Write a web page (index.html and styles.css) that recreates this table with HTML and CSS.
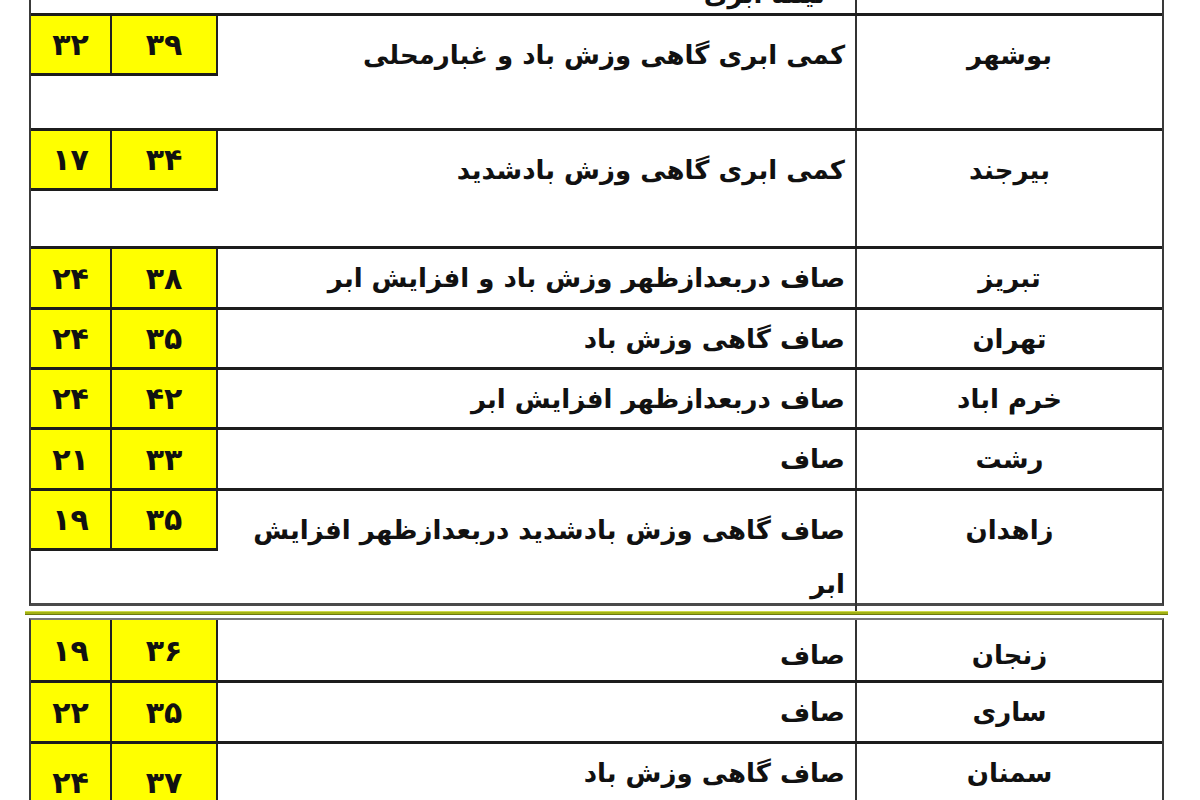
FILE: index.html
```html
<!DOCTYPE html>
<html lang="fa">
<head>
<meta charset="utf-8">
<title>جدول وضعیت هوا</title>
<link rel="stylesheet" href="styles.css">
</head>
<body>
<div class="sheet">
  <div class="table upper">
    <div class="row partial">
      <div class="nums blank"></div>
      <div class="desc"><span class="cut">نیمه ابری</span></div>
      <div class="city"></div>
    </div>
    <div class="row tall">
      <div class="nums"><div class="yb"><span class="mn">۳۲</span><span class="mx">۳۹</span></div></div>
      <div class="desc">کمی ابری گاهی وزش باد و غبارمحلی</div>
      <div class="city">بوشهر</div>
    </div>
    <div class="row tall t2">
      <div class="nums"><div class="yb"><span class="mn">۱۷</span><span class="mx">۳۴</span></div></div>
      <div class="desc">کمی ابری گاهی وزش بادشدید</div>
      <div class="city">بیرجند</div>
    </div>
    <div class="row h61">
      <div class="nums"><div class="yb"><span class="mn">۲۴</span><span class="mx">۳۸</span></div></div>
      <div class="desc">صاف دربعدازظهر وزش باد و افزایش ابر</div>
      <div class="city">تبریز</div>
    </div>
    <div class="row">
      <div class="nums"><div class="yb"><span class="mn">۲۴</span><span class="mx">۳۵</span></div></div>
      <div class="desc">صاف گاهی وزش باد</div>
      <div class="city">تهران</div>
    </div>
    <div class="row">
      <div class="nums"><div class="yb"><span class="mn">۲۴</span><span class="mx">۴۲</span></div></div>
      <div class="desc">صاف دربعدازظهر افزایش ابر</div>
      <div class="city">خرم اباد</div>
    </div>
    <div class="row h61">
      <div class="nums"><div class="yb"><span class="mn">۲۱</span><span class="mx">۳۳</span></div></div>
      <div class="desc">صاف</div>
      <div class="city">رشت</div>
    </div>
    <div class="row tall">
      <div class="nums"><div class="yb"><span class="mn">۱۹</span><span class="mx">۳۵</span></div></div>
      <div class="desc">صاف گاهی وزش بادشدید دربعدازظهر افزایش<br>ابر</div>
      <div class="city">زاهدان</div>
    </div>
  </div>
  <div class="divider"></div>
  <div class="table lower">
    <div class="row first">
      <div class="nums"><div class="yb"><span class="mn">۱۹</span><span class="mx">۳۶</span></div></div>
      <div class="desc">صاف</div>
      <div class="city">زنجان</div>
    </div>
    <div class="row h61">
      <div class="nums"><div class="yb"><span class="mn">۲۲</span><span class="mx">۳۵</span></div></div>
      <div class="desc">صاف</div>
      <div class="city">ساری</div>
    </div>
    <div class="row">
      <div class="nums"><div class="yb"><span class="mn">۲۴</span><span class="mx">۳۷</span></div></div>
      <div class="desc">صاف گاهی وزش باد</div>
      <div class="city">سمنان</div>
    </div>
  </div>
</div>
</body>
</html>
```

FILE: styles.css
```css
* { box-sizing: border-box; }
html, body { margin: 0; padding: 0; background: #fff; }
body {
  font-family: "DejaVu Sans", sans-serif;
  font-weight: bold;
  color: #111;
}
.sheet {
  width: 1200px;
  height: 800px;
  overflow: hidden;
}
.table {
  margin-left: 29px;
  width: 1135px;
  border-left: 2px solid #3a3a3a;
  border-right: 2px solid #3a3a3a;
}
.upper { border-bottom: 3px solid #4a4a4a; }
.lower { border-top: 2px solid #777; }
.row {
  display: grid;
  grid-template-columns: 187px 1fr 307px;
  height: 60px;
  border-top: 3px solid #1c1c1c;
}
.row.h61 { height: 61px; }
.row.tall { height: 115px; }
.row.t2 { height: 118px; }
.row.partial { height: 13px; border-top: none; overflow: hidden; }
.lower .row.first { border-top: none; height: 60px; }
.lower .row { height: 61px; }
.lower .row:last-child { height: 80px; }

.nums { display: flex; flex-direction: column; }
.yb {
  display: grid;
  grid-template-columns: 81px 106px;
  height: 100%;
  background: #ffff00;
}
.tall .yb { height: 60px; flex: none; border-bottom: 3px solid #1c1c1c; }
.yb span {
  display: flex;
  align-items: center;
  justify-content: center;
  font-size: 30px;
  border-right: 2px solid #222;
  direction: rtl;
}
.desc {
  direction: rtl;
  text-align: right;
  padding: 4px 10px 0 0;
  font-size: 26px;
  line-height: 50px;
  white-space: nowrap;
}
.city {
  direction: rtl;
  text-align: center;
  border-left: 2px solid #333;
  padding-top: 4px;
  font-size: 26px;
  line-height: 50px;
}
.tall .desc, .tall .city { padding-top: 12px; line-height: 54px; }
.lower .first .desc, .lower .first .city { padding-top: 10px; }
.partial .desc { padding: 0 30px 0 0; line-height: 13px; }
.cut { display: block; margin-top: -21px; line-height: 30px; }

.divider {
  margin: 5px 0 3px 25px;
  width: 1143px;
  height: 4px;
  background: #a2b212;
  border-top: 1px solid #cfd84a;
  border-bottom: 1px solid #6f7a10;
}
```
